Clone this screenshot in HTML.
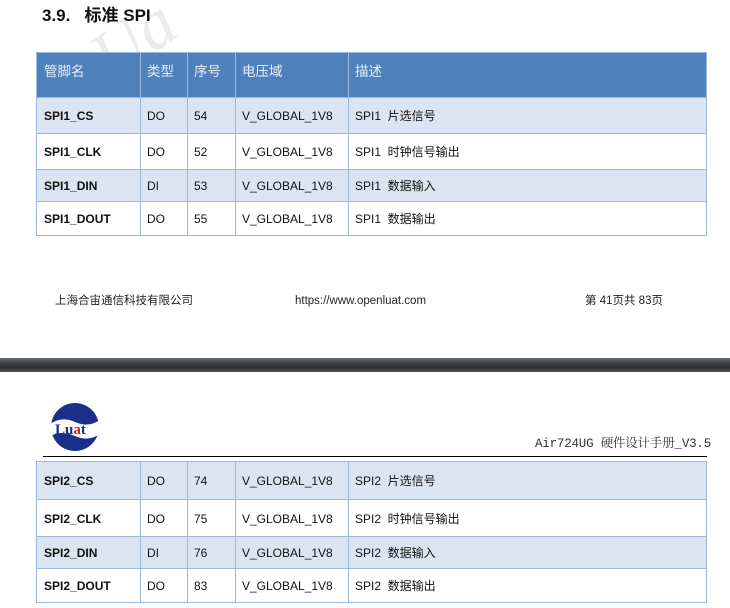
<!DOCTYPE html>
<html><head><meta charset="utf-8"><style>
body{margin:0;width:730px;height:608px;background:#fff;position:relative;overflow:hidden;font-family:"Liberation Sans","Noto Sans CJK SC",sans-serif;}
.a{position:absolute;white-space:nowrap;}
.r{position:absolute;left:36px;width:671px;border:1px solid #9db8dd;box-sizing:border-box;}
.c{position:absolute;top:0;bottom:0;border-left:1px solid #9db8dd;}
.t{position:absolute;font-size:12px;line-height:16px;height:16px;color:#111;white-space:nowrap;}
.h .t{color:#e8eef8;font-size:13.5px;}
</style></head><body>
<div class="a" style="font:italic 70px 'Liberation Serif',serif;color:#ebebeb;transform:rotate(-35deg);transform-origin:0 100%;left:90px;top:40px;">LUa</div>
<div class="a" style="left:42px;top:5px;font-size:17px;line-height:22px;font-weight:bold;color:#111;">3.9.&nbsp;&nbsp;&nbsp;标准 SPI</div>

<div id="t1"></div>
<div class="a" style="left:55px;top:294px;font-size:11.5px;line-height:14px;color:#222;">上海合宙通信科技有限公司</div>
<div class="a" style="left:295px;top:294px;font-size:11.5px;line-height:14px;color:#222;">https://www.openluat.com</div>
<div class="a" style="left:585px;top:294px;font-size:11.5px;line-height:14px;color:#222;">第 41页共 83页</div>

<div class="a" style="left:0;top:358px;width:730px;height:14px;background:linear-gradient(#6a6d70,#3a3d40 40%,#2e3134 70%,#55585b);"></div>

<svg class="a" style="left:50px;top:402px" width="50" height="50" viewBox="0 0 50 50">
<circle cx="25" cy="25" r="24" fill="#1b2f8a"/>
<path d="M0 22 Q12 14 25 20 Q38 26 50 18 L50 32 Q38 40 25 34 Q12 28 0 34Z" fill="#fff"/>
<text x="5" y="32" font-family="Liberation Serif,serif" font-weight="bold" font-size="15" fill="#1b2f8a">Lu<tspan fill="#d02020">a</tspan>t</text>
</svg>
<div class="a" style="left:535px;top:436px;font:12.5px/16px 'Liberation Mono','Noto Serif CJK SC',monospace;letter-spacing:-0.2px;color:#333;">Air724UG 硬件设计手册_V3.5</div>
<div class="a" style="left:43px;top:456px;width:664px;height:1px;background:#000;"></div>

<script>
function tbl(top,rows){
 var cols=[36,139,186,234,347];var out='';
 rows.forEach(function(r){
  var h=r[0],bg=r[1],cells=r[2],cls=r[3]||'';
  var tt=cls?Math.round(h/2-12):Math.round(h/2-8);
  out+='<div class="r '+cls+'" style="top:'+top+'px;height:'+(h+1)+'px;background:'+bg+'">';
  for(var k=1;k<5;k++)out+='<div class="c" style="left:'+(cols[k]-36)+'px"></div>';
  for(var k=0;k<5;k++)out+='<div class="t" style="left:'+(cols[k]-36+7)+'px;top:'+tt+'px;'+(k==0&&!cls?'font-weight:bold':'')+'">'+cells[k]+'</div>';
  out+='</div>';top+=h;
 });
 return out;
}
var L='#dbe5f1',W='#fff';
var a=tbl(52,[[45,'#4f81bd',['管脚名','类型','序号','电压域','描述'],'h'],
[36,L,['SPI1_CS','DO','54','V_GLOBAL_1V8','SPI1&nbsp; 片选信号']],
[36,W,['SPI1_CLK','DO','52','V_GLOBAL_1V8','SPI1&nbsp; 时钟信号输出']],
[32,L,['SPI1_DIN','DI','53','V_GLOBAL_1V8','SPI1&nbsp; 数据输入']],
[34,W,['SPI1_DOUT','DO','55','V_GLOBAL_1V8','SPI1&nbsp; 数据输出']]]);
var b=tbl(461,[
[38,L,['SPI2_CS','DO','74','V_GLOBAL_1V8','SPI2&nbsp; 片选信号']],
[37,W,['SPI2_CLK','DO','75','V_GLOBAL_1V8','SPI2&nbsp; 时钟信号输出']],
[32,L,['SPI2_DIN','DI','76','V_GLOBAL_1V8','SPI2&nbsp; 数据输入']],
[34,W,['SPI2_DOUT','DO','83','V_GLOBAL_1V8','SPI2&nbsp; 数据输出']]]);
document.getElementById('t1').innerHTML=a+b;
</script>
</body></html>
